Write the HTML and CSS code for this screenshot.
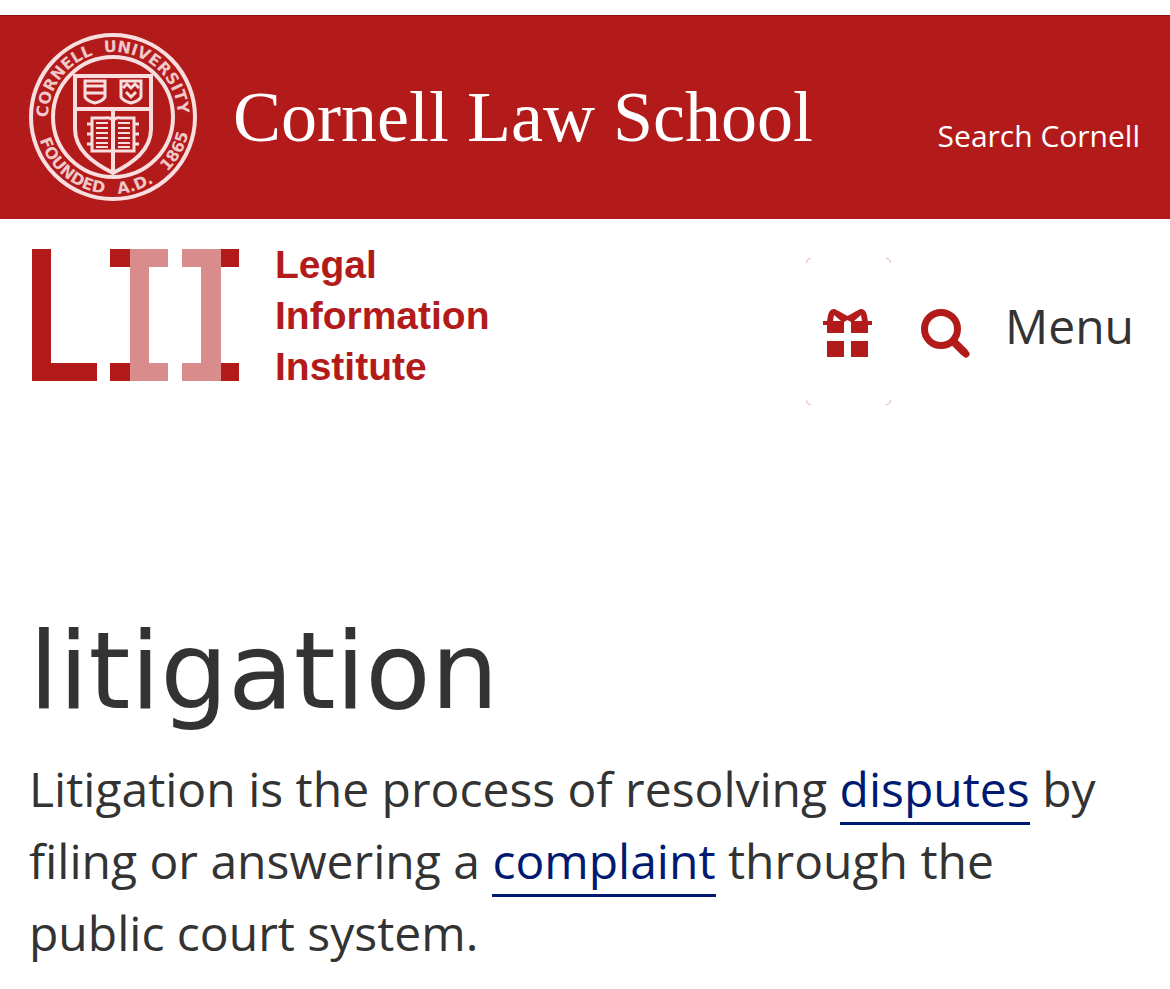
FILE: index.html
```html
<!DOCTYPE html>
<html lang="en">
<head>
    <meta charset="utf-8">
    <meta name="viewport" content="width=device-width, initial-scale=1">
    <title>litigation | Legal Information Institute</title>
    <link rel="stylesheet" href="styles.css">
</head>
<body>
    <header>
        <div class="cornell-bar">
            <a class="cornell-brand" href="#">
                <svg class="seal" viewBox="0 0 168 168" aria-hidden="true">
                    <defs>
                        <path id="arcTop" d="M84 149A65 65 0 0 1 84 19A65 65 0 0 1 84 149"/>
                        <path id="arcBottom" d="M84 7A77 77 0 0 0 84 161A77 77 0 0 0 84 7"/>
                    </defs>
                    <g fill="none" stroke="#f8dede">
                        <circle cx="84" cy="84" r="82" stroke-width="4"/>
                        <circle cx="84" cy="84" r="60" stroke-width="4"/>
                        <!-- shield -->
                        <path stroke-width="4" d="M46 43H122V96C122 117 104 130 84 140C64 130 46 117 46 96ZM46 76H122M84 76V140"/>
                        <path stroke-width="3" d="M56 48H76V64Q74 68 66 70Q58 68 56 64ZM92 48H112V64Q110 68 102 70Q94 68 92 64Z"/>
                        <path stroke-width="3" d="M57 53H75M57 60H75M94 55L98 51L102 55L106 51L110 55M97 59L102 64L107 59"/>
                        <!-- book -->
                        <path stroke-width="3" d="M84 88Q82 84 76 85H63V118H84H105V85H92Q86 84 84 88"/>
                        <path stroke-width="2" d="M67 90H79M67 95H79M67 100H79M67 105H79M67 110H79M67 114H79M89 90H101M89 95H101M89 100H101M89 105H101M89 110H101M89 114H101"/>
                        <path stroke-width="3" d="M58 91H63M58 101H63M58 111H63M105 91H110M105 101H110M105 111H110"/>
                    </g>
                    <g class="seal-text">
                        <text><textPath href="#arcTop" startOffset="35%">CORNELL</textPath></text>
                        <text><textPath href="#arcTop" startOffset="61%">UNIVERSITY</textPath></text>
                        <text><textPath href="#arcBottom" startOffset="39%">FOUNDED</textPath></text>
                        <text><textPath href="#arcBottom" startOffset="55%">A.D.</textPath></text>
                        <text><textPath href="#arcBottom" startOffset="67%">1865</textPath></text>
                    </g>
                </svg>
                <span class="wordmark">Cornell Law School</span>
            </a>
            <a class="search-cornell" href="#">Search Cornell</a>
        </div>
        <div class="lii-bar">
            <a class="lii-brand" href="#">
                <svg class="lii-logo" viewBox="0 0 207 132" aria-hidden="true">
                    <path fill="#b31b1b" d="M0 0H19V114H65V132H0ZM78 0H98V18H78ZM78 114H98V132H78ZM189 0H207V18H189ZM189 114H207V132H189Z"/>
                    <path fill="#d98c8c" d="M98 0H136V18H117V114H136V132H98ZM150 0H189V132H150V114H169V18H150Z"/>
                </svg>
                <span class="lii-name">Legal<br>Information<br>Institute</span>
            </a>
            <nav>
                <button class="gift" type="button" aria-label="Donate">
                    <svg viewBox="0 0 85 147">
                        <path fill="none" stroke="#dcb4b4" d="M.5 5Q.5.5 5 .5M80 .5Q84.500.5 84.500 5M84.500 142Q84.500 146.500 80 146.500M5 146.500Q.5 146.500.5 142"/>
                        <g fill="#b31b1b">
                            <path d="M17 63H38V75H21V67H17ZM45 63H66V67H62V75H45ZM21 83H38V99H21ZM45 83H62V99H45Z"/>
                            <path fill-rule="evenodd" d="M21 64C22 56 23 51 28 51C30 51 32 53 41.500 58C51 53 53 51 55 51C60 51 61 56 62 64H45L41.500 62L38 64ZM27 63H35L28 57ZM48 63H56L55 57Z"/>
                        </g>
                    </svg>
                </button>
                <button class="search" type="button" aria-label="Search">
                    <svg viewBox="0 0 49 49" fill="none" stroke="#b31b1b">
                        <circle cx="20" cy="20" r="16.500" stroke-width="7"/>
                        <path d="M32 32L44 44" stroke-width="8"/>
                        <path d="M44 44L45 45" stroke-width="7" stroke-linecap="round"/>
                    </svg>
                </button>
                <button class="menu" type="button">Menu</button>
            </nav>
        </div>
    </header>
    <main>
        <h1>litigation</h1>
        <p>Litigation is the process of resolving <a href="#">disputes</a> by filing or answering a <a href="#">complaint</a> through the public court system.</p>
    </main>
</body>
</html>
```
FILE: styles.css
```css
* {
    box-sizing: border-box;
}
body {
    margin: 0;
    padding-top: 15px;
    background: #fff;
    color: #333;
    font-family: "Open Sans", sans-serif;
    font-size: 48px;
    line-height: 72px;
}
a {
    text-decoration: none;
}
button {
    padding: 0;
    border: none;
    background: none;
    color: inherit;
    font: inherit;
    cursor: pointer;
}
svg {
    display: block;
}
.cornell-bar {
    display: flex;
    justify-content: space-between;
    align-items: center;
    padding: 17px 30px 18px 29px;
    border-top: 1px solid #8a1010;
    background: #b31b1b;
}
.cornell-brand {
    display: flex;
    align-items: center;
    gap: 36px;
    color: #fff;
}
.seal {
    width: 168px;
    height: 168px;
}
.seal-text {
    fill: #f0c8c8;
    font-family: "DejaVu Sans", sans-serif;
    font-size: 16px;
    font-weight: bold;
    text-anchor: middle;
}
.wordmark {
    font-family: "Liberation Serif", serif;
    font-size: 72px;
    white-space: nowrap;
}
.search-cornell {
    padding-top: 38px;
    color: #fff;
    font-size: 30px;
    white-space: nowrap;
}
.lii-bar {
    display: flex;
    justify-content: space-between;
    align-items: flex-start;
    padding: 30px 36px 0 32px;
}
.lii-brand {
    display: flex;
    gap: 36px;
    color: #b31b1b;
}
.lii-logo {
    width: 207px;
    height: 132px;
}
.lii-name {
    margin-top: -10px;
    font-family: "Liberation Sans", sans-serif;
    font-size: 39px;
    font-weight: bold;
    line-height: 51px;
}
nav {
    display: flex;
    align-items: center;
    padding-top: 9px;
}
.gift svg {
    width: 85px;
    height: 147px;
}
.search {
    margin: 0 35px 0 30px;
    padding-top: 4px;
}
.search svg {
    width: 49px;
    height: 49px;
}
.menu {
    padding-bottom: 12px;
}
main {
    padding: 206px 29px 30px;
}
h1 {
    margin: 0 0 22px;
    font-family: "DejaVu Sans", sans-serif;
    font-size: 107px;
    font-weight: normal;
    line-height: 120px;
}
p {
    margin: 0;
}
p a {
    padding-bottom: 1px;
    border-bottom: 3px solid #001a72;
    color: #001a72;
}
```
